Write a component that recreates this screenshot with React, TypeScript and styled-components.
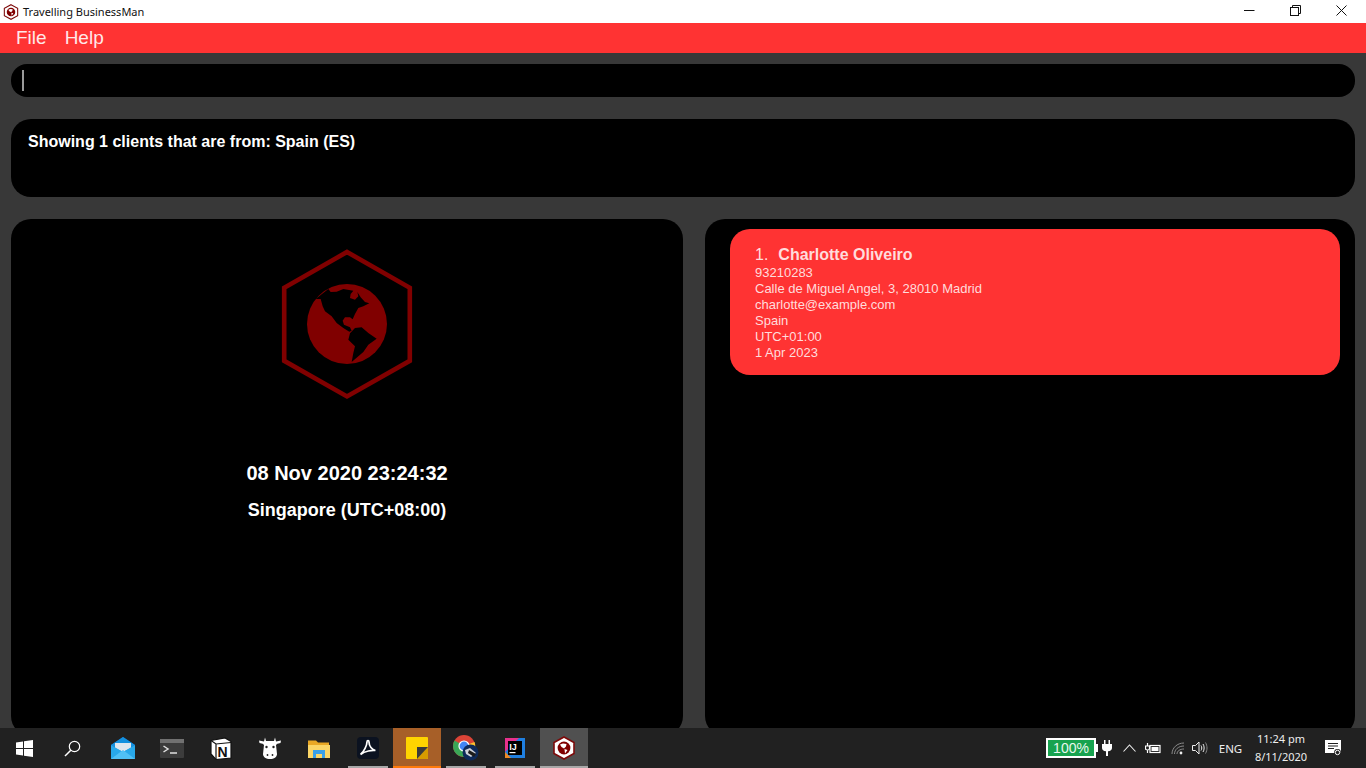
import React from "react";
import styled, { createGlobalStyle } from "styled-components";

const Global = createGlobalStyle`
  html, body { margin: 0; padding: 0; height: 100%; overflow: hidden; background: #383838; }
  * { box-sizing: border-box; }
  #root { height: 100%; }
`;

const Win = styled.div`
  position: relative;
  width: 1366px;
  height: 768px;
  overflow: hidden;
  display: flex;
  flex-direction: column;
  background: #383838;
  font-family: "Liberation Sans", Arial, sans-serif;
`;

const TitleBar = styled.div`
  height: 23px;
  flex: none;
  background: #fff;
  display: flex;
  align-items: center;
  padding-left: 3px;
`;
const TitleText = styled.span`
  margin-left: 4px;
  font: 11px/23px "Noto Sans", "Open Sans", sans-serif;
  color: #111;
`;
const WinControls = styled.div`
  margin-left: auto;
  display: flex;
  height: 100%;
  padding-right: 2px;
`;
const WinButton = styled.div`
  width: 46px;
  height: 100%;
  padding-bottom: 3px;
  display: flex;
  align-items: center;
  justify-content: center;
`;

const MenuBar = styled.div`
  height: 30px;
  flex: none;
  background: #ff3333;
  display: flex;
  align-items: center;
  gap: 18px;
  padding-left: 16px;
`;
const MenuItem = styled.span`
  font-size: 19px;
  color: #ffe8e8;
`;

const Content = styled.div`
  flex: 1;
  min-height: 0;
  padding: 11px 11px 0;
  display: flex;
  flex-direction: column;
  gap: 22px;
`;
const CommandBox = styled.div`
  height: 33px;
  flex: none;
  background: #000;
  border-radius: 16px;
  padding: 6px 0 0 11px;
`;
const Caret = styled.div`
  width: 2px;
  height: 21px;
  background: #9a9a9a;
`;
const ResultBox = styled.div`
  height: 78px;
  flex: none;
  background: #000;
  border-radius: 20px;
  padding: 14px 17px;
  color: #fff;
  font-weight: 700;
  font-size: 16px;
  line-height: 18px;
`;
const Columns = styled.div`
  height: 517px;
  flex: none;
  display: flex;
  gap: 22px;
`;
const ClockPanel = styled.div`
  width: 672px;
  background: #000;
  border-radius: 20px;
  padding-top: 21px;
  display: flex;
  flex-direction: column;
  align-items: center;
  color: #fff;
  font-weight: 700;
`;
const GlobeArt = styled.svg`
  display: block;
  flex: none;
`;
const DateLine = styled.div`
  margin-top: 51px;
  font-size: 20px;
  line-height: 24px;
`;
const ZoneLine = styled.div`
  margin-top: 14px;
  font-size: 18px;
  line-height: 22px;
`;
const ListPanel = styled.div`
  width: 650px;
  background: #000;
  border-radius: 20px;
  padding: 10px 15px 0 25px;
`;
const Card = styled.div`
  height: 146px;
  background: #ff3333;
  border-radius: 20px;
  padding: 17px 25px;
  color: #ffdcdc;
`;
const NameRow = styled.div`
  display: flex;
  gap: 10px;
  font-size: 16px;
  line-height: 18px;
  margin-bottom: 1px;
`;
const Name = styled.span`
  font-weight: 700;
`;
const Detail = styled.div`
  font-size: 13px;
  line-height: 16px;
  white-space: nowrap;
`;

const Taskbar = styled.div`
  position: absolute;
  left: 0;
  right: 0;
  bottom: 0;
  height: 40px;
  background: #212121;
  display: flex;
  color: #fff;
`;
const StartSlot = styled.div`
  width: 48px;
  flex: none;
  height: 40px;
  display: flex;
  align-items: center;
  justify-content: center;
`;
const AppSlots = styled.div`
  display: flex;
  gap: 1px;
  margin-left: 3px;
`;
const AppSlot = styled.div<{ $state?: "running" | "flash" | "active" }>`
  position: relative;
  width: 48px;
  height: 40px;
  display: flex;
  align-items: center;
  justify-content: center;
  background: ${(p) => (p.$state === "flash" ? "#a75f28" : p.$state === "active" ? "#505050" : "transparent")};
  &::after {
    content: "";
    display: ${(p) => (p.$state ? "block" : "none")};
    position: absolute;
    bottom: 0;
    left: ${(p) => (p.$state === "running" ? 4 : 0)}px;
    right: ${(p) => (p.$state === "running" ? 4 : 0)}px;
    height: 2px;
    background: ${(p) => (p.$state === "flash" ? "#ff7a0a" : "#a8a8a8")};
  }
`;
const Tray = styled.div`
  margin-left: auto;
  display: flex;
  align-items: center;
  height: 40px;
  padding-right: 11px;
`;
const BatteryMeter = styled.div`
  width: 50px;
  height: 20px;
  border: 2px solid #fff;
  background: #17a34f;
  font-size: 14px;
  line-height: 16px;
  text-align: center;
  color: #e9f7ee;
  position: relative;
  &::after {
    content: "";
    position: absolute;
    right: -4px;
    top: 4px;
    width: 2px;
    height: 8px;
    background: #fff;
  }
`;
const TrayIcon = styled.div<{ $w: number }>`
  width: ${(p) => p.$w}px;
  flex: none;
  display: flex;
  align-items: center;
  justify-content: center;
`;
const Lang = styled.div`
  width: 41px;
  text-align: center;
  font: 11.5px "Noto Sans", "Open Sans", sans-serif;
  color: #eee;
`;
const Clock = styled.div`
  width: 60px;
  text-align: center;
  font: 11px/18px "Noto Sans", "Open Sans", sans-serif;
  color: #eee;
  white-space: nowrap;
`;
const IdeText = styled.text`
  font-family: "Liberation Sans", sans-serif;
  font-weight: 700;
`;

const landA =
  "M47 63L62 63L68 85L75 100L95 115L110 135L130 150L148 161L155 158L150 148L132 140L128 128L135 118L150 118L158 124L165 108L175 90L190 85L208 76L195 72L182 58L172 42L175 55L165 65L150 60L152 48L160 38L130 33L110 41L92 42L85 33Z";
const landB =
  "M150 166L165 150L185 148L205 165L230 182L205 200L190 222L155 252L160 225L165 205L145 185Z";

const HexGlobe = () => (
  <GlobeArt width={170} height={170} viewBox="0 0 170 170">
    <path d="M85 12L147.8 47.8V120.8L85 156.4L22.2 120.8V47.8Z" fill="none" stroke="#800000" strokeWidth="4.6" />
    <g transform="translate(38 38) scale(0.3333)">
      <circle cx="141" cy="138" r="120" fill="#800000" />
      <path d={landA} fill="#000" />
      <path d={landB} fill="#000" />
    </g>
  </GlobeArt>
);

const AppLogo = ({ size = 24 }: { size?: number }) => (
  <svg width={size} height={size} viewBox="0 0 24 24">
    <path d="M12 1L22 6.5V17.5L12 23L2 17.5V6.5Z" fill="#fff" stroke="#7d0a0a" strokeWidth="1.6" />
    <circle cx="12" cy="12" r="6.4" fill="#800000" />
    <path d="M8 8.5L11 7.5L14.5 8L14 10.5L12 12.5L9.5 11ZM12.5 13L15.5 14L13 17.5Z" fill="#fff" />
  </svg>
);

const details = [
  "93210283",
  "Calle de Miguel Angel, 3, 28010 Madrid",
  "charlotte@example.com",
  "Spain",
  "UTC+01:00",
  "1 Apr 2023",
];

export default function App() {
  return (
    <Win>
      <Global />
      <TitleBar>
        <AppLogo size={16} />
        <TitleText>Travelling BusinessMan</TitleText>
        <WinControls>
          <WinButton>
            <svg width="11" height="11" viewBox="0 0 11 11"><path d="M0 5.5H10.5" stroke="#111" strokeWidth="1" /></svg>
          </WinButton>
          <WinButton>
            <svg width="11" height="11" viewBox="0 0 11 11" fill="none" stroke="#111" strokeWidth="1">
              <rect x="0.5" y="2.5" width="8" height="8" />
              <path d="M2.5 2.5V0.5H10.5V8.5H8.5" />
            </svg>
          </WinButton>
          <WinButton>
            <svg width="11" height="11" viewBox="0 0 11 11"><path d="M0.5 0.5L10.5 10.5M10.5 0.5L0.5 10.5" stroke="#111" strokeWidth="1" /></svg>
          </WinButton>
        </WinControls>
      </TitleBar>
      <MenuBar>
        <MenuItem>File</MenuItem>
        <MenuItem>Help</MenuItem>
      </MenuBar>
      <Content>
        <CommandBox><Caret /></CommandBox>
        <ResultBox>Showing 1 clients that are from: Spain (ES)</ResultBox>
        <Columns>
          <ClockPanel>
            <HexGlobe />
            <DateLine>08 Nov 2020 23:24:32</DateLine>
            <ZoneLine>Singapore (UTC+08:00)</ZoneLine>
          </ClockPanel>
          <ListPanel>
            <Card>
              <NameRow><span>1.</span><Name>Charlotte Oliveiro</Name></NameRow>
              {details.map((d) => <Detail key={d}>{d}</Detail>)}
            </Card>
          </ListPanel>
        </Columns>
      </Content>
      <Taskbar>
        <StartSlot>
          <svg width="17" height="17" viewBox="0 0 17 17" fill="#fff">
            <path d="M0 2.4L7 1.4V8H0ZM8 1.3L17 0V8H8ZM0 9H7V15.6L0 14.6ZM8 9H17V17L8 15.7Z" />
          </svg>
        </StartSlot>
        <StartSlot>
          <svg width="17" height="17" viewBox="0 0 17 17" fill="none" stroke="#fff" strokeWidth="1.2">
            <circle cx="10.5" cy="6.5" r="5.2" />
            <path d="M6.8 10.2L1 16" strokeWidth="1.5" />
          </svg>
        </StartSlot>
        <AppSlots>
          <AppSlot>
            <svg width="24" height="22" viewBox="0 0 24 22">
              <path d="M0 8L12 0L24 8V21H0Z" fill="#0f6cbd" />
              <path d="M0 8L12 0L24 8L12 15Z" fill="#1490df" />
              <path d="M4 6H20V11L12 15L4 11Z" fill="#dfe6ee" />
              <path d="M0 8L12 15L24 8V22H0Z" fill="#28a8ea" />
              <path d="M0 22L12 13L24 22Z" fill="#50c0f5" />
            </svg>
          </AppSlot>
          <AppSlot>
            <svg width="24" height="19" viewBox="0 0 24 19">
              <rect width="24" height="19" rx="1" fill="#3c3c3c" />
              <rect width="24" height="4" fill="#717171" />
              <path d="M3.5 7L8 10L3.5 13" fill="none" stroke="#e0e0e0" strokeWidth="1.5" />
              <path d="M10 14H17" stroke="#e0e0e0" strokeWidth="1.5" />
            </svg>
          </AppSlot>
          <AppSlot>
            <svg width="22" height="23" viewBox="0 0 22 23">
              <path d="M1 3.5L15 1L21 4.5V21L6 22.5L1 17Z" fill="#fff" stroke="#111" strokeWidth="1.2" />
              <path d="M1 3.5L6 7L21 5.5M6 7V22" fill="none" stroke="#111" strokeWidth="1.2" />
              <IdeText x="7.5" y="19.5" fontSize="14" fill="#111">N</IdeText>
            </svg>
          </AppSlot>
          <AppSlot>
            <svg width="24" height="24" viewBox="0 0 24 24" fill="#fff">
              <path d="M7 1.5L8 5H16L17 1.5L18 5.5L23 4.5L22.5 7L18.5 8V9H5.5V8L1.5 7L1 4.5L6 5.5Z" />
              <path d="M6 9H18L19 18C19 21 16 23 12 23C8 23 5 21 5 18Z" />
              <circle cx="8.5" cy="11" r="1.2" fill="#212121" />
              <circle cx="15.5" cy="11" r="1.2" fill="#212121" />
              <circle cx="9.5" cy="19" r="0.9" fill="#212121" />
              <circle cx="14.5" cy="19" r="0.9" fill="#212121" />
            </svg>
          </AppSlot>
          <AppSlot>
            <svg width="22" height="19" viewBox="0 0 22 19">
              <path d="M0 1.5H8L10 3.5H21V18H0Z" fill="#e9a825" />
              <path d="M0 6H22V19H0Z" fill="#fbd667" />
              <path d="M5 19V11H17V19H14V15H8V19Z" fill="#3aa0e8" />
            </svg>
          </AppSlot>
          <AppSlot $state="running">
            <svg width="22" height="22" viewBox="0 0 22 22">
              <rect width="22" height="22" rx="4" fill="#0b1220" />
              <path d="M3.5 17.5C7 15 10 8 10 5C10 3 12 3 12 5C12 9 15 13 18.5 13.5C15 13 8 14 3.5 17.5Z" fill="none" stroke="#fff" strokeWidth="1.7" />
            </svg>
          </AppSlot>
          <AppSlot $state="flash">
            <svg width="22" height="22" viewBox="0 0 22 22">
              <rect width="22" height="22" rx="1" fill="#ffd400" />
              <path d="M22 10V21C22 21.5 21.5 22 21 22H11Z" fill="#d89b00" />
              <path d="M11 10H22L11 22Z" fill="#3a3a3a" />
            </svg>
          </AppSlot>
          <AppSlot $state="running">
            <svg width="26" height="26" viewBox="0 0 26 26">
              <circle cx="11" cy="11" r="11" fill="#db4437" />
              <path d="M11 11L1.5 5.5A11 11 0 0 0 11 22Z" fill="#3aa757" />
              <path d="M11 11L21.5 7A11 11 0 0 1 11 22Z" fill="#fbc02d" />
              <circle cx="11" cy="11" r="5.6" fill="#fff" />
              <circle cx="11" cy="11" r="4.4" fill="#4285f4" />
              <circle cx="17.5" cy="17.5" r="8" fill="#0d2a5a" />
              <path d="M12 15L17 13L23 18L18 22L13 19Z" fill="#cfd3da" />
              <path d="M16 15L23 19L21 22L15 18Z" fill="#1c1c1c" />
            </svg>
          </AppSlot>
          <AppSlot $state="running">
            <svg width="20" height="20" viewBox="0 0 20 20">
              <rect width="20" height="20" fill="#1f7fe0" />
              <path d="M0 0H14L0 14Z" fill="#e8318d" />
              <path d="M0 14L6 20H0Z" fill="#f08a24" />
              <rect x="3" y="3" width="14" height="14" fill="#000" />
              <IdeText x="4.2" y="11.5" fontSize="9" fill="#fff">IJ</IdeText>
              <rect x="4.5" y="14" width="6" height="1.2" fill="#fff" />
            </svg>
          </AppSlot>
          <AppSlot $state="active"><AppLogo /></AppSlot>
        </AppSlots>
        <Tray>
          <BatteryMeter>100%</BatteryMeter>
          <TrayIcon $w={22}>
            <svg width="10" height="16" viewBox="0 0 10 16" fill="#fff">
              <path d="M2 0H3.5V4H6.5V0H8V4H10V8C10 10 8.5 11 6 11.3V16H4V11.3C1.5 11 0 10 0 8V4H2Z" />
            </svg>
          </TrayIcon>
          <TrayIcon $w={22}>
            <svg width="13" height="8" viewBox="0 0 13 8" fill="none" stroke="#eee" strokeWidth="1.1"><path d="M0.5 7.5L6.5 1L12.5 7.5" /></svg>
          </TrayIcon>
          <TrayIcon $w={26}>
            <svg width="16" height="11" viewBox="0 0 16 11" fill="none" stroke="#fff" strokeWidth="1.2">
              <rect x="5" y="2.5" width="10" height="7" />
              <rect x="6.5" y="4" width="7" height="4" fill="#fff" stroke="none" />
              <path d="M2.5 0V3M0.5 3H4.5V5.5C4.5 6.5 3.5 7 2.5 7C1.5 7 0.5 6.5 0.5 5.5ZM2.5 7V10" />
            </svg>
          </TrayIcon>
          <TrayIcon $w={24}>
            <svg width="14" height="13" viewBox="0 0 14 13" fill="none" stroke="#8a8a8a" strokeWidth="1">
              <path d="M1 12C1 6 6 1 13 1M3.5 12C3.5 7.5 7.5 4 13 4M6 12C6 9 9 7 13 7" />
              <circle cx="10" cy="11" r="1.4" fill="#eee" stroke="none" />
            </svg>
          </TrayIcon>
          <TrayIcon $w={20}>
            <svg width="16" height="14" viewBox="0 0 16 14" fill="none" stroke="#eee" strokeWidth="1">
              <path d="M0.5 4.5H3.5L7 1V13L3.5 9.5H0.5Z" />
              <path d="M9 4.5C10 6 10 8 9 9.5M11 3C12.5 5 12.5 9 11 11" />
              <path d="M13.5 1.5C15.5 5 15.5 9 13.5 12.5" stroke="#888" />
            </svg>
          </TrayIcon>
          <Lang>ENG</Lang>
          <Clock>11:24 pm<br />8/11/2020</Clock>
          <TrayIcon $w={44}>
            <svg width="17" height="17" viewBox="0 0 17 17" fill="#fff">
              <path d="M0 0H16V13H0Z" />
              <path d="M3 3.5H13M3 6H13M3 8.5H9" stroke="#212121" strokeWidth="1" />
              <circle cx="12.5" cy="12.5" r="3.4" fill="#212121" />
              <circle cx="12.5" cy="12.5" r="2.2" fill="none" stroke="#fff" strokeWidth="1" />
            </svg>
          </TrayIcon>
        </Tray>
      </Taskbar>
    </Win>
  );
}
